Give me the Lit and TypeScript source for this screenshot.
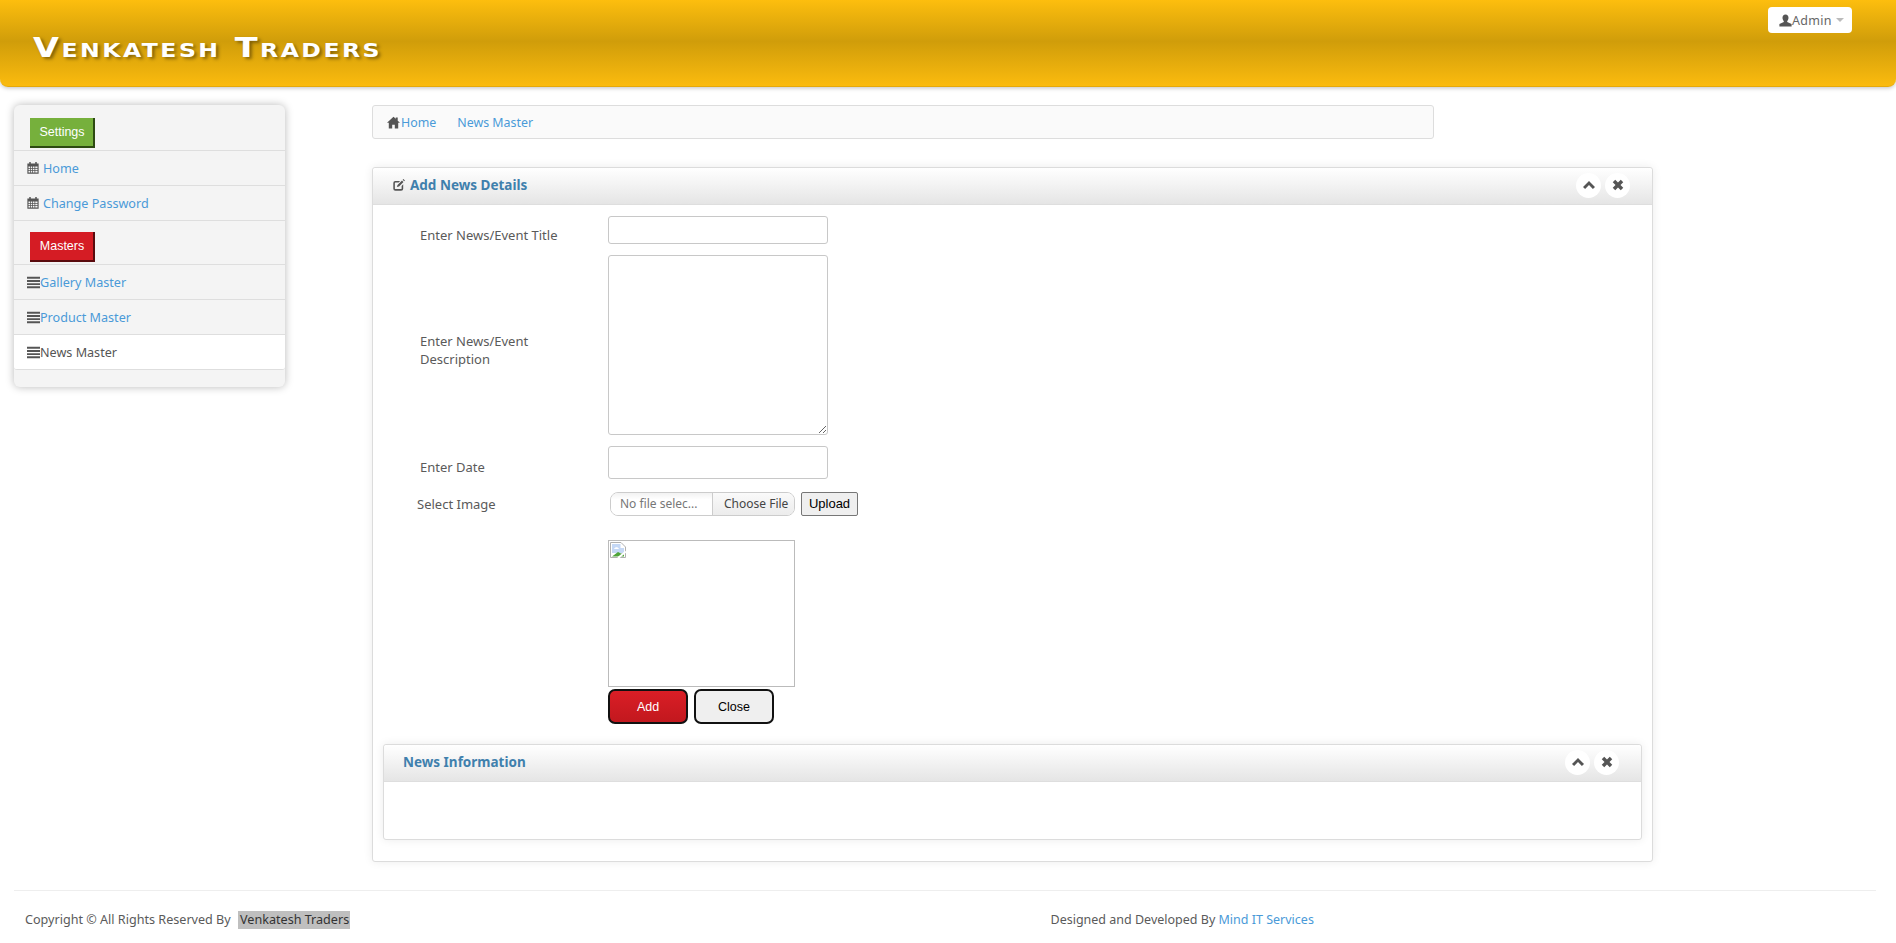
import { LitElement, html, css, svg } from "lit";
import { customElement } from "lit/decorators.js";

const icons = {
  home: svg`<path d="M8 .8 0 8.400h2.200V15.500h4.200v-4.800h3.200v4.800h4.200V8.400H16l-2.800-2.700V1.800h-2.400v1.500z"/>`,
  user: svg`<path d="M8 .5c2.400 0 3.700 1.700 3.700 4 0 1.700-.7 3.100-1.600 4v1.300l5.400 2.400v3.300H.5v-3.300l5.400-2.400V8.500c-.9-.9-1.600-2.300-1.600-4 0-2.300 1.300-4 3.700-4z"/>`,
  calendar: svg`<path fill-rule="evenodd" d="M3 0h2v2h6V0h2v2h2.500v13.500H.5V2H3zM2 6v2h2V6zm3 0v2h2V6zm3 0v2h2V6zm3 0v2h3V6zM2 9v2h2V9zm3 0v2h2V9zm3 0v2h2V9zm3 0v2h3V9zM2 12v2h2v-2zm3 0v2h2v-2zm3 0v2h2v-2zm3 0v2h3v-2z"/>`,
  list: svg`<path d="M0 1h16v2.400H0zM0 4.900h16v2.400H0zM0 8.800h16v2.400H0zM0 12.700h16v2.400H0z"/>`,
  edit: svg`<path d="M3 2.500h6.500L7.500 4.600H3.300c-.4 0-.8.400-.8.800v7.200c0 .4.400.8.800.8h7.400c.4 0 .8-.4.800-.8V9.200l2.100-2.100v5.900a2.800 2.800 0 0 1-2.800 2.800H3.200A2.800 2.800 0 0 1 .4 13V5.300A2.800 2.800 0 0 1 3 2.500z"/><path d="M6 8 12 2l2 2-6 6-2.800.8zM12.900 1.100l1-1 2 2-1 1z"/>`,
  up: svg`<path d="M8 2.500 16 10.500 13.200 13.300 8 8.100 2.800 13.300 0 10.500z"/>`,
  close: svg`<path d="M4.300 1 8 4.700 11.700 1 15 4.300 11.300 8 15 11.700 11.700 15 8 11.300 4.300 15 1 11.700 4.700 8 1 4.300z"/>`,
};

const icon = (name: keyof typeof icons, cls = "") =>
  html`<svg class="ic ${cls}" viewBox="0 0 16 16" aria-hidden="true">${icons[name]}</svg>`;

@customElement("app-root")
export class AppRoot extends LitElement {
  static styles = css`
    :host {
      display: block;
      font-family: "Noto Sans", "Open Sans", sans-serif;
      font-size: 13px;
      color: #5a5a5a;
      background: #fff;
    }
    * { box-sizing: border-box; }
    a { color: #4a9ad8; text-decoration: none; }
    .ic { width: 13px; height: 13px; fill: #555; flex: none; display: block; }

    .top {
      height: 87px;
      display: flex;
      justify-content: space-between;
      align-items: flex-start;
      padding: 7px 44px 0 33px;
      background: linear-gradient(#fdbe0e 0%, #d09d0a 48%, #fbbb0e 100%);
      border-bottom: 1px solid #e5a90b;
      border-radius: 0 0 8px 8px;
      box-shadow: 0 1px 4px rgba(0, 0, 0, 0.25);
    }
    .brand {
      margin: 25px 0 0;
      font: bold 27px/1.2 "DejaVu Sans", sans-serif;
      font-variant: small-caps;
      letter-spacing: 2px;
      color: #fff;
      text-shadow: 2px 2px 3px rgba(0, 0, 0, 0.4);
      transform: scaleX(1.24);
      transform-origin: left center;
    }
    .admin {
      width: 84px;
      height: 26px;
      display: flex;
      align-items: center;
      padding-left: 11px;
      background: #fff;
      border-radius: 4px;
      color: #666;
      font-size: 12.500px;
      letter-spacing: 0.3px;
    }
    .admin .ic { width: 13px; height: 13px; }
    .caret {
      width: 0;
      height: 0;
      margin-left: 4px;
      border: 4px solid transparent;
      border-top-color: #bbb;
      border-bottom: 0;
    }

    .layout {
      display: flex;
      align-items: flex-start;
      gap: 87px;
      padding: 18px 0 0 14px;
    }

    .side {
      width: 271px;
      height: 282px;
      background: #f4f4f4;
      border-radius: 6px;
      box-shadow: 0 0 8px rgba(0, 0, 0, 0.28);
      font-size: 12.600px;
    }
    .sect { border-bottom: 1px solid #dedede; padding: 13px 0 2px 16px; height: 46px; }
    .sect.second { height: 44px; padding-top: 11px; }
    .tag {
      display: flex;
      align-items: center;
      justify-content: center;
      width: 65px;
      height: 30px;
      padding-left: 1px;
      color: #fff;
      font: 12.500px "Liberation Sans", Arial, sans-serif;
      border-right: 2px solid;
      border-bottom: 2px solid;
    }
    .tag.green { background: #76b03c; border-color: #2d4a12; }
    .tag.red { background: #d51c24; border-color: #5a0b0e; }
    .row {
      height: 35px;
      display: flex;
      align-items: center;
      padding-left: 13px;
      border-bottom: 1px solid #dedede;
    }
    .row .cal { margin-right: 4px; width: 12px; height: 12px; }
    .row .lst { width: 13px; height: 13px; }
    .row.active { background: #fff; color: #555; border-radius: 0 0 3px 3px; }

    .main { width: 1281px; }
    .crumbs {
      width: 1062px;
      height: 34px;
      display: flex;
      align-items: center;
      padding-left: 14px;
      background: #fafafa;
      border: 1px solid #ddd;
      border-radius: 3px;
      margin-bottom: 28px;
      font-size: 12.400px;
    }
    .crumbs .ic { margin-right: 1px; }
    .crumbs a + a { margin-left: 21px; }

    .panel {
      background: #fff;
      border: 1px solid #dcdcdc;
      border-radius: 3px;
      box-shadow: 0 0 10px rgba(0, 0, 0, 0.08);
    }
    .outer { height: 695px; }
    .inner { height: 96px; margin: 20px 10px 0; }
    .phead {
      height: 37px;
      display: flex;
      align-items: center;
      justify-content: space-between;
      padding: 0 22px 2px 20px;
      background: linear-gradient(#fff, #e5e5e5);
      border-bottom: 1px solid #dedede;
      border-radius: 3px 3px 0 0;
    }
    .phead.in { padding-left: 19px; }
    .ptitle {
      display: flex;
      align-items: center;
      gap: 5px;
      font-weight: 700;
      font-size: 13.500px;
      color: #3f80ad;
    }
    .ptitle .ic { width: 12px; height: 12px; }
    .tools { display: flex; gap: 4px; }
    .tool {
      width: 25px;
      height: 25px;
      display: flex;
      align-items: center;
      justify-content: center;
      border-radius: 50%;
      background: #fff;
    }
    .tool .ic { width: 12px; height: 12px; }

    .form {
      display: grid;
      grid-template-columns: 188px 1fr;
      padding: 11px 0 0 47px;
    }
    .label { align-self: center; max-width: 145px; line-height: 18px; padding-bottom: 2px; }
    .label.date { padding-bottom: 4px; }
    .label.file { align-self: start; padding: 3px 0 0; margin-left: -3px; }
    input, textarea {
      display: block;
      width: 220px;
      border: 1px solid #c8c8c8;
      border-radius: 3px;
      background: #fff;
      margin: 0;
      padding: 0;
    }
    .i1 { height: 28px; margin-bottom: 11px; }
    .i2 { height: 180px; margin-bottom: 11px; }
    .i3 { height: 33px; margin-bottom: 13px; }
    .fileline {
      display: flex;
      gap: 6px;
      margin-left: 2px;
      margin-bottom: 24px;
      height: 24px;
    }
    .filebox {
      width: 185px;
      display: flex;
      border: 1px solid #ccc;
      border-radius: 8px;
      overflow: hidden;
      font-size: 12px;
    }
    .filename {
      width: 101px;
      padding-left: 9px;
      line-height: 21px;
      color: #777;
      white-space: nowrap;
      background: linear-gradient(#f2f2f2, #fff 30%);
    }
    .filebtn {
      flex: 1;
      padding-left: 11px;
      line-height: 21px;
      border-left: 1px solid #ccc;
      background: linear-gradient(#fafafa, #ececec);
      color: #444;
      white-space: nowrap;
    }
    .upload {
      width: 57px;
      height: 24px;
      padding: 0 0 2px;
      border: 1px solid #767676;
      border-radius: 2px;
      background: #efefef;
      color: #000;
      font: 13px "Liberation Sans", Arial, sans-serif;
    }
    .preview {
      width: 187px;
      height: 147px;
      border: 1px solid #bbb;
      padding: 1px;
      margin-bottom: 2px;
    }
    .preview svg { display: block; width: 16px; height: 16px; }
    .actions { display: flex; gap: 6px; }
    .btn {
      width: 80px;
      height: 35px;
      padding: 0;
      border: 2px solid #111;
      border-radius: 7px;
      font: 12.500px "Liberation Sans", Arial, sans-serif;
    }
    .btn.add { color: #fff; background: linear-gradient(#da1e26, #c2181e); }
    .btn.cancel { color: #000; background: #efefef; }

    .foot {
      margin: 28px 20px 0 14px;
      border-top: 1px solid #eee;
      display: grid;
      grid-template-columns: 1025.500px 1fr;
      padding: 20px 0 0 11px;
      line-height: 18px;
      font-size: 12.600px;
    }
    .foot .credit { font-size: 12.500px; }
    .foot mark {
      display: inline-block;
      margin-left: 4px;
      padding: 0 1px 0 2px;
      background: #bfbfbf;
      color: #333;
    }
  `;

  private tools() {
    return html`<div class="tools">
      <span class="tool">${icon("up")}</span>
      <span class="tool">${icon("close")}</span>
    </div>`;
  }

  render() {
    return html`
      <header class="top">
        <h1 class="brand">Venkatesh Traders</h1>
        <div class="admin">${icon("user")}Admin<span class="caret"></span></div>
      </header>

      <div class="layout">
        <nav class="side">
          <div class="sect"><span class="tag green">Settings</span></div>
          <div class="row">${icon("calendar", "cal")}<a href="#">Home</a></div>
          <div class="row">${icon("calendar", "cal")}<a href="#">Change Password</a></div>
          <div class="sect second"><span class="tag red">Masters</span></div>
          <div class="row">${icon("list", "lst")}<a href="#">Gallery Master</a></div>
          <div class="row">${icon("list", "lst")}<a href="#">Product Master</a></div>
          <div class="row active">${icon("list", "lst")}<span>News Master</span></div>
        </nav>

        <main class="main">
          <div class="crumbs">${icon("home")}<a href="#">Home</a><a href="#">News Master</a></div>

          <section class="panel outer">
            <div class="phead">
              <div class="ptitle">${icon("edit")}<span>Add News Details</span></div>
              ${this.tools()}
            </div>
            <div class="form">
              <label class="label">Enter News/Event Title</label>
              <div><input class="i1" type="text" /></div>
              <label class="label">Enter News/Event Description</label>
              <div><textarea class="i2"></textarea></div>
              <label class="label date">Enter Date</label>
              <div><input class="i3" type="text" /></div>
              <label class="label file">Select Image</label>
              <div class="fileline">
                <div class="filebox">
                  <span class="filename">No file selec...</span>
                  <span class="filebtn">Choose File</span>
                </div>
                <button class="upload">Upload</button>
              </div>
              <span></span>
              <div class="preview">
                <svg viewBox="0 0 16 16" aria-hidden="true">
                  <path d="M.5.5h10.500l4.500 4.500v10.500H.5z" fill="#fff" stroke="#b0b0b0" />
                  <path d="M2 2h8.500v4H14v5H2z" fill="#c5d8f5" />
                  <path d="M4 7c1-2.500 4-2.500 5 0z" fill="#fff" />
                  <path d="M2 14.500 8 10l3 1.500h3v3z" fill="#4fa43a" />
                  <path d="M8 16 16 9.500" stroke="#fff" stroke-width="2" />
                </svg>
              </div>
              <span></span>
              <div class="actions">
                <button class="btn add">Add</button>
                <button class="btn cancel">Close</button>
              </div>
            </div>

            <section class="panel inner">
              <div class="phead in">
                <div class="ptitle"><span>News Information</span></div>
                ${this.tools()}
              </div>
            </section>
          </section>
        </main>
      </div>

      <footer class="foot">
        <div>Copyright © All Rights Reserved By <mark>Venkatesh Traders</mark></div>
        <div class="credit">Designed and Developed By <a href="#">Mind IT Services</a></div>
      </footer>
    `;
  }
}
